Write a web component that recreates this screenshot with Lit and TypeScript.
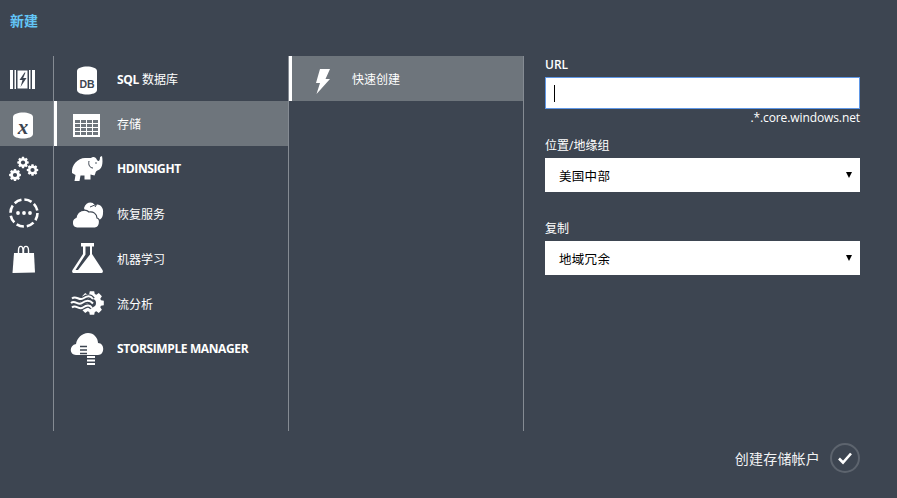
import { LitElement, html, css, svg } from "lit";
import { customElement } from "lit/decorators.js";

const gear = (cx: number, cy: number, r: number, hole: number) => {
  const teeth = 8;
  let d = "";
  for (let i = 0; i < teeth; i++) {
    const a = (i / teeth) * Math.PI * 2;
    const w = Math.PI / teeth / 1.7;
    const pts = [
      [r * 0.78, a - w * 1.3],
      [r, a - w * 0.8],
      [r, a + w * 0.8],
      [r * 0.78, a + w * 1.3],
    ];
    for (const [rad, t] of pts) {
      d += `${d ? "L" : "M"}${(cx + rad * Math.cos(t)).toFixed(2)} ${(cy + rad * Math.sin(t)).toFixed(2)}`;
    }
  }
  d += "Z";
  return svg`<path d=${d} fill="#fff"/><circle cx=${cx} cy=${cy} r=${hole} fill="#3d4551"/>`;
};

const bg = "#3d4551";
const active = "#6e757c";

const tableCells = [120, 124, 128, 132].flatMap((y) =>
  [75, 81, 87, 93].map((x) => svg`<rect x=${x} y=${y} width="5" height="3" fill=${active}/>`)
);

const waves =
  "M72 298.500C76 295 79 301 83 298.500S90 295 93 299M71 303C75 299.500 78 306 82 303S90 300 93 303.500M72 307.500C76 304 79 310.500 83 307.500S90 305 92 308";

const railIcons = [
  svg`<g fill="#fff"><rect x="10" y="70" width="3" height="19"/><rect x="14.500" y="70" width="1.500" height="19"/><rect x="32" y="70" width="3" height="19"/><rect x="29" y="70" width="1.500" height="19"/><path d="M17.500 70.500H27.500V88.500H17.500Z"/></g><path d="M24.500 72.500L19.500 80H22.500L20.500 87L26.500 78H23.200L25.500 72.500Z" fill="${bg}"/>`,
  svg`<path d="M13 117C13 111 33 111 33 117V134C33 140 13 140 13 134Z" fill="#fff"/><text x="23" y="133.500" text-anchor="middle" font-family="'Liberation Serif',serif" font-style="italic" font-weight="700" font-size="21" fill="#3d4551">x</text>`,
  svg`${gear(23, 162.500, 5.800, 2.100)}${gear(32.500, 170, 5.800, 2.100)}${gear(15, 175, 6, 2.100)}`,
  svg`<circle cx="24" cy="213" r="13.500" fill="none" stroke="#fff" stroke-width="2.600" stroke-dasharray="7.600 3"/><circle cx="18" cy="213" r="1.900" fill="#fff"/><circle cx="24" cy="213" r="1.900" fill="#fff"/><circle cx="30" cy="213" r="1.900" fill="#fff"/>`,
  svg`<path d="M14 253H34L35 272.500L12.500 273Z" fill="#fff"/><path d="M18.500 256V250.500C18.500 245 23 245 23 250.500V255M23.500 256V250.500C23.500 245 28.500 245 28.500 250.500V255" fill="none" stroke="#fff" stroke-width="1.400"/>`,
];

const navIcons = [
  svg`<path d="M77 71C77 65 97 65 97 71V90C97 96 77 96 77 90Z" fill="#fff"/><text x="87" y="87.500" text-anchor="middle" font-family="'Liberation Sans',sans-serif" font-size="10.500" font-weight="700" fill="#3d4551">DB</text>`,
  svg`<rect x="73" y="114" width="27" height="23" fill="#fff"/>${tableCells}`,
  svg`<path d="M72 173C71 165 78 158 85 158L91 158C93 156 96 157 97 160C98.500 162 100 161 100 157L102 156C103.500 164 101.500 169 98.500 170C96 171 95.500 172 95.500 173L94.500 175.500L90.500 174.500L90.500 179.500L84.500 179.500L84.500 175.500L80.500 175.500L79.500 181L74.500 181L75.500 175Z" fill="#fff"/><path d="M89 161C88 165 90 168 93 168" fill="none" stroke="${bg}" stroke-width="1"/><circle cx="96" cy="163" r=".8" fill="${bg}"/>`,
  svg`<path d="M84 208C86 202 92 201 95 205C100 203 104 208 103 213C103 217 101 220 98 220L88 220Z" fill="#fff"/><path d="M77 228C71 228 71 219 76 217.500C77 211 85 208 89 212C93 211 97 214 97 218C101 219 100 228 95 228Z" fill="#fff" stroke="${bg}" stroke-width="1.200"/><path d="M90 207L96 204.500M93.500 203.500L96.500 204.500L95 207" fill="none" stroke="${bg}" stroke-width="1"/>`,
  svg`<path d="M81 243H94V246.500H92V254L102.500 270C103.500 272 102.500 273 100.500 273H74.500C72.500 273 71.500 272 72.500 270L83 254V246.500H81Z" fill="#fff"/><path d="M85.500 246.500H90V254.500L88 257L78 270H75.500L85.500 254.500Z" fill="${bg}"/>`,
  svg`${gear(92, 303, 12, 4)}<path d=${waves} fill="none" stroke="${bg}" stroke-width="4.400"/><path d=${waves} fill="none" stroke="#fff" stroke-width="2"/>`,
  svg`<path d="M76 355C69 355 69 345 76 344C77 338 82 333 88 333C94 333 98 338 98 343C105 343 105 355 98 355Z" fill="#fff"/><path d="M80 346.500H87M80 350H87M80 353.500H87" stroke="${bg}" stroke-width="1.400"/><path d="M87 357H95M87 360.500H95M87 364H95" stroke="#fff" stroke-width="2"/>`,
];

const navItems = [
  { label: html`<b>SQL</b> 数据库` },
  { label: html`存储`, active: true },
  { label: html`<b>HDINSIGHT</b>`, latin: true },
  { label: html`恢复服务` },
  { label: html`机器学习` },
  { label: html`流分析` },
  { label: html`<b>STORSIMPLE MANAGER</b>`, latin: true },
];

@customElement("app-root")
export class AppRoot extends LitElement {
  static styles = css`
    :host {
      display: block;
      width: 897px;
      height: 498px;
      overflow: hidden;
      background: #3d4551;
      color: #fff;
      font-family: "Open Sans", "Noto Sans CJK SC", sans-serif;
      font-size: 12px;
    }
    .title {
      height: 56px;
      box-sizing: border-box;
      padding: 11px 0 0 10px;
      font-size: 14px;
      line-height: 20px;
      font-weight: 700;
      color: #63c6f7;
    }
    .main {
      display: flex;
      height: 375px;
    }
    .col {
      box-sizing: content-box;
      border-right: 1px solid #858b93;
    }
    .rail { width: 53px; }
    .nav { width: 234px; }
    .sub { width: 234px; }
    .row {
      display: flex;
      align-items: center;
      height: 45px;
    }
    .row svg { flex: none; display: block; }
    .row.active { background: #6e757c; }
    .nav .row.active, .sub .row.active { box-shadow: inset 3px 0 0 #fff; }
    .nav b {
      font-weight: 700;
      letter-spacing: -0.38px;
    }
    .text { line-height: 16px; padding-top: 2px; }
    .text.latin { padding-top: 0; }
    .form {
      width: 315px;
      padding-left: 21px;
      font-size: 12px;
    }
    .label { height: 22px; line-height: 20px; }
    .label.url { height: 21px; line-height: 18px; font-weight: 600; }
    .input {
      height: 32px;
      box-sizing: border-box;
      background: #fff;
      border: 1px solid #5f97e6;
      display: flex;
      align-items: center;
      padding-left: 8px;
    }
    .caret { width: 1px; height: 17px; background: #000; }
    .hint {
      height: 27px;
      line-height: 18px;
      text-align: right;
      letter-spacing: -0.1px;
    }
    .select {
      height: 34px;
      background: #fff;
      color: #000;
      display: flex;
      align-items: center;
      justify-content: space-between;
      padding: 0 8px 0 14px;
      font-size: 12.5px;
      letter-spacing: 0.3px;
    }
    .spacer { height: 27px; }
    .arrow { width: 0; height: 0; border: 3px solid transparent; border-top: 6px solid #000; border-bottom: 0; }
    .footer {
      display: flex;
      justify-content: flex-end;
      align-items: center;
      gap: 10px;
      padding: 12px 37px 0 0;
      font-size: 14px;
      letter-spacing: 0.2px;
      height: 30px;
      color: #f2f3f4;
    }
    .footer svg { display: block; }
  `;

  render() {
    return html`
      <div class="title">新建</div>
      <div class="main">
        <div class="col rail">
          ${railIcons.map(
            (ic, i) => html`<div class="row ${i === 1 ? "active" : ""}">
              <svg width="53" height="45" viewBox="0 ${56 + i * 45} 53 45">${ic}</svg>
            </div>`
          )}
        </div>
        <div class="col nav">
          ${navItems.map(
            (it, i) => html`<div class="row ${it.active ? "active" : ""}">
              <svg width="63" height="45" viewBox="54 ${56 + i * 45} 63 45">${navIcons[i]}</svg>
              <span class="text ${it.latin ? "latin" : ""}">${it.label}</span>
            </div>`
          )}
        </div>
        <div class="col sub">
          <div class="row active">
            <svg width="63" height="45" viewBox="289 56 63 45"><path d="M320 69H330L325.500 79H330L316.500 94L320 83H316Z" fill="#fff"/></svg>
            <span class="text">快速创建</span>
          </div>
        </div>
        <div class="form">
          <div class="label url">URL</div>
          <div class="input"><span class="caret"></span></div>
          <div class="hint">.*.core.windows.net</div>
          <div class="label">位置/地缘组</div>
          <div class="select"><span>美国中部</span><span class="arrow"></span></div>
          <div class="spacer"></div>
          <div class="label">复制</div>
          <div class="select"><span>地域冗余</span><span class="arrow"></span></div>
        </div>
      </div>
      <div class="footer">
        <span>创建存储帐户</span>
        <svg width="30" height="30" viewBox="0 0 30 30">
          <circle cx="15" cy="15" r="14" fill="none" stroke="#5d646e" stroke-width="2"/>
          <path d="M9 15.500L13 19.500L21 10.500" fill="none" stroke="#fff" stroke-width="2.600"/>
        </svg>
      </div>
    `;
  }
}
